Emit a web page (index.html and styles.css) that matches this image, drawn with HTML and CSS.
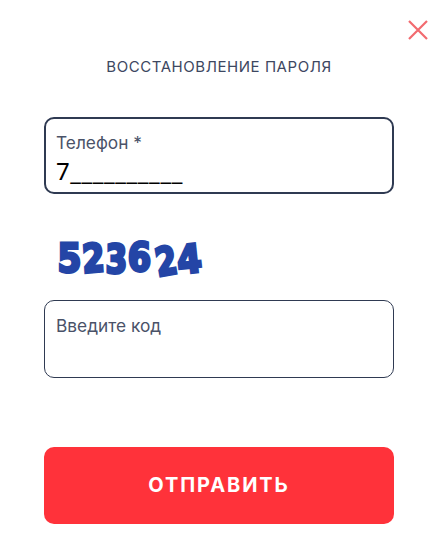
FILE: index.html
```html
<!DOCTYPE html>
<html>
  <head>
    <title>Восстановление пароля</title>
    <link rel="stylesheet" href="styles.css">
  </head>
  <body>
    <div class="modal">
      <button class="close-button">
        <svg class="close-icon" width="20" height="20" viewBox="0 0 20 20">
          <path d="M1 1L19 19M19 1L1 19" stroke="#f26a6f" stroke-width="2.2" fill="none"/>
        </svg>
      </button>

      <p class="title">ВОССТАНОВЛЕНИЕ ПАРОЛЯ</p>

      <div class="field field-active">
        <p class="field-label">Телефон *</p>
        <p class="field-value">7__________</p>
      </div>

      <div class="captcha">
        <span class="digit digit-a">5</span>
        <span class="digit digit-b">2</span>
        <span class="digit digit-c">3</span>
        <span class="digit digit-d">6</span>
        <span class="digit digit-e">2</span>
        <span class="digit digit-f">4</span>
      </div>

      <div class="field">
        <p class="field-label">Введите код</p>
      </div>

      <button class="submit-button">ОТПРАВИТЬ</button>
    </div>
  </body>
</html>
```

FILE: styles.css
```css
body {
    margin: 0;
    background-color: white;
    font-family: "Inter", "Noto Sans", sans-serif;
}
p {
    margin: 0;
}
.modal {
    display: flex;
    flex-direction: column;
    width: 350px;
    padding: 20px 47px 23px 44px;
}
.close-button {
    align-self: flex-end;
    width: 20px;
    height: 20px;
    margin-right: -34px;
    padding: 0;
    background-color: transparent;
    border: none;
    cursor: pointer;
}
.close-icon {
    display: block;
}
.title {
    margin-top: 17px;
    font-size: 15px;
    line-height: 19px;
    letter-spacing: 0.55px;
    text-align: center;
    color: #3d4761;
}
.field {
    box-sizing: border-box;
    height: 78px;
    padding: 14px 11px 0;
    background-color: white;
    border: 1px solid #2f3a52;
    border-radius: 10px;
}
.field-active {
    height: 77px;
    margin-top: 41px;
    padding: 13px 10px 0;
    border-width: 2px;
}
.field-label {
    font-size: 17.3px;
    line-height: 22px;
    color: #4a5268;
}
.field-value {
    margin-top: 2px;
    font-family: "Noto Sans", sans-serif;
    font-size: 24px;
    line-height: 30px;
    letter-spacing: 0.6px;
    color: black;
}
.captcha {
    display: flex;
    height: 48px;
    margin-top: 41px;
    margin-bottom: 17px;
    padding-left: 12px;
    font-family: "DejaVu Sans", sans-serif;
    font-size: 39px;
    font-weight: bold;
    line-height: 48px;
    color: #2445a6;
    -webkit-text-stroke: 3px #2445a6;
}
.digit {
    display: block;
    width: 24px;
    text-align: center;
}
.digit-a {
    transform: scaleX(0.88);
}
.digit-b {
    transform: scaleX(0.82) rotate(-4deg);
}
.digit-c {
    margin-left: -1px;
    transform: translateY(1px) scaleX(0.8);
}
.digit-d {
    margin-left: -1px;
    transform: translateY(-1px) scaleX(0.86);
}
.digit-e {
    margin-left: 3px;
    transform: translateY(3px) rotate(-10deg) scaleX(0.78);
}
.digit-f {
    margin-left: -1px;
    transform: translateY(1px) rotate(-6deg) scaleX(0.9);
}
.submit-button {
    height: 77px;
    margin-top: 69px;
    padding-bottom: 3px;
    background-color: #ff323a;
    border: none;
    border-radius: 10px;
    font-family: "Inter", sans-serif;
    font-size: 20px;
    font-weight: bold;
    letter-spacing: 1.9px;
    color: white;
    cursor: pointer;
}
```
